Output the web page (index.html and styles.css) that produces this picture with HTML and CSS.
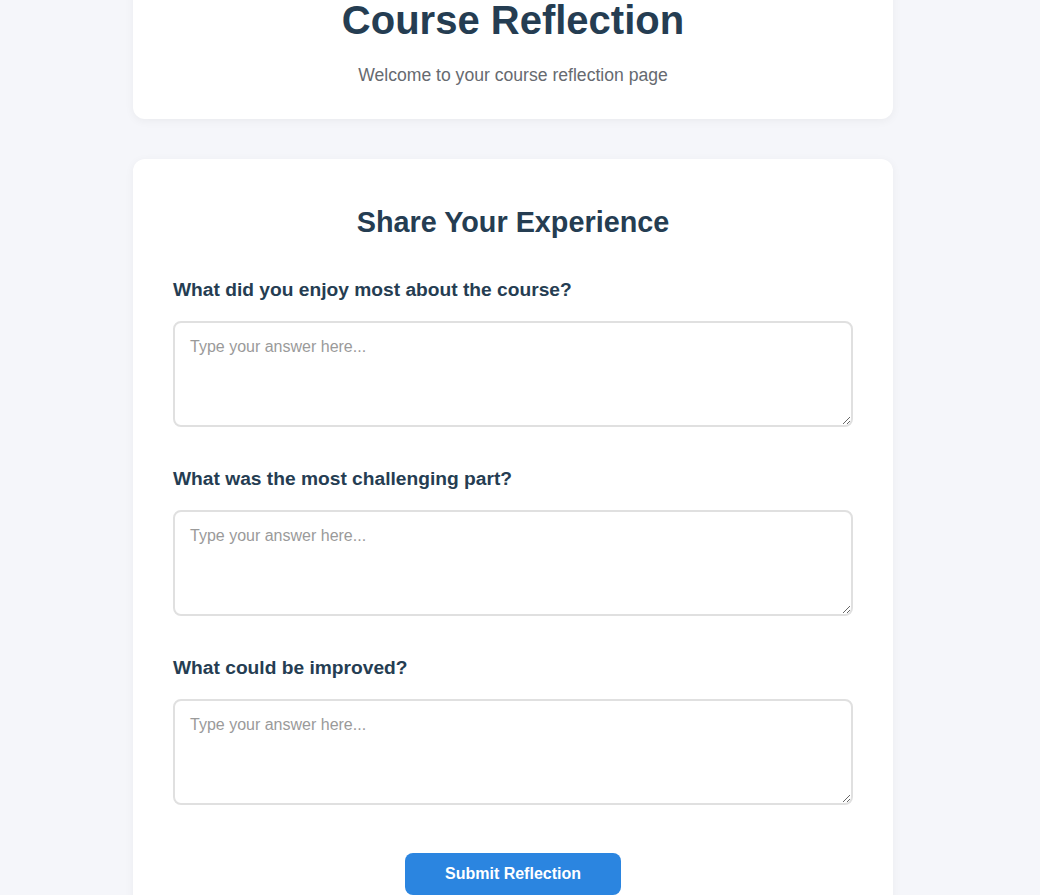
FILE: index.html
```html
<!DOCTYPE html>
<html lang="en">
<head>
<meta charset="utf-8">
<title>Course Reflection</title>
<link rel="stylesheet" href="styles.css">
</head>
<body>
<main class="container">
  <header class="card header-card">
    <h1 class="title">Course Reflection</h1>
    <p class="subtitle">Welcome to your course reflection page</p>
  </header>
  <section class="card form-card">
    <h2 class="form-title">Share Your Experience</h2>
    <form class="form">
      <div class="group">
        <label class="label" for="q1">What did you enjoy most about the course?</label>
        <textarea class="answer" id="q1" placeholder="Type your answer here..."></textarea>
      </div>
      <div class="group">
        <label class="label" for="q2">What was the most challenging part?</label>
        <textarea class="answer" id="q2" placeholder="Type your answer here..."></textarea>
      </div>
      <div class="group">
        <label class="label" for="q3">What could be improved?</label>
        <textarea class="answer" id="q3" placeholder="Type your answer here..."></textarea>
      </div>
      <div class="actions">
        <button class="submit" type="button">Submit Reflection</button>
      </div>
    </form>
  </section>
</main>
</body>
</html>
```

FILE: styles.css
```css
* { box-sizing: border-box; }

html, body { margin: 0; padding: 0; }

body {
  background: #f5f6fa;
  font-family: "Liberation Sans", Arial, sans-serif;
  color: #2c3e50;
  padding-right: 14px;
}

.container {
  width: 760px;
  margin: -32px auto 0;
  display: flex;
  flex-direction: column;
  gap: 40px;
  padding-bottom: 40px;
}

.card {
  background: #ffffff;
  border-radius: 12px;
  box-shadow: 0 2px 10px rgba(0, 0, 0, 0.05);
}

.header-card {
  padding: 30px 40px 33px;
  text-align: center;
}

.title {
  margin: 0 0 22px;
  font-size: 40px;
  font-weight: 700;
  color: #253d52;
}

.subtitle {
  margin: 0;
  font-size: 17.6px;
  color: #666a70;
}

.form-card {
  padding: 47px 40px 40px;
}

.form-title {
  margin: 0 0 40px;
  text-align: center;
  font-size: 28.8px;
  font-weight: 700;
  color: #253d52;
}

.group {
  display: flex;
  flex-direction: column;
  margin-bottom: 41px;
}

.label {
  font-size: 19.2px;
  font-weight: 700;
  color: #253d52;
  margin-bottom: 20px;
}

.answer {
  display: block;
  width: 100%;
  height: 106px;
  padding: 15px;
  border: 2px solid #e0e0e0;
  border-radius: 8px;
  font-family: "Liberation Sans", Arial, sans-serif;
  font-size: 16px;
  color: #333;
  resize: vertical;
  outline: none;
}

.answer::placeholder {
  color: #9a9a9a;
}

.actions {
  display: flex;
  justify-content: center;
  padding-top: 7px;
}

.submit {
  background: #2b85e0;
  color: #ffffff;
  border: none;
  border-radius: 8px;
  padding: 12px 40px;
  font-family: "Liberation Sans", Arial, sans-serif;
  font-size: 16px;
  font-weight: 700;
  cursor: pointer;
}
```
